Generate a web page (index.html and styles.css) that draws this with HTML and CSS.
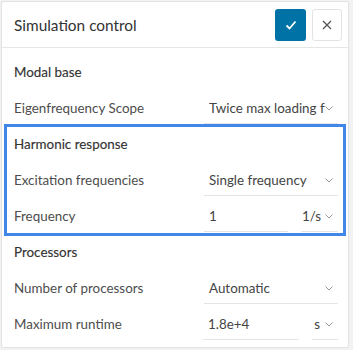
FILE: index.html
```html
<!DOCTYPE html>
<html lang="en">
<head>
  <meta charset="UTF-8">
  <meta name="viewport" content="width=device-width, initial-scale=1.0">
  <title>Simulation control</title>
  <link rel="stylesheet" href="styles.css">
</head>
<body>
  <div class="panel">
    <div class="panel-head">
      <h1 class="title">Simulation control</h1>
      <div class="actions">
        <button class="btn btn-ok">
          <svg width="14" height="14" viewBox="0 0 14 14"><polyline points="2.5,7.5 5.5,10.5 11.5,3.5" fill="none" stroke="#fff" stroke-width="1.8"/></svg>
        </button>
        <button class="btn btn-close">
          <svg width="10" height="10" viewBox="0 0 10 10"><path d="M1 1L9 9M9 1L1 9" stroke="#555" stroke-width="1.3"/></svg>
        </button>
      </div>
    </div>

    <div class="panel-body">
      <div class="row section">Modal base</div>
      <div class="row">
        <span class="label">Eigenfrequency Scope</span>
        <div class="field select">
          <span class="value clip">Twice max loading frequency</span>
          <svg class="chev" width="8" height="5" viewBox="0 0 8 5"><polyline points="0.5,0.5 4,4 7.5,0.5" fill="none" stroke="#999"/></svg>
        </div>
      </div>

      <div class="group active">
        <div class="row section">Harmonic response</div>
        <div class="row">
          <span class="label">Excitation frequencies</span>
          <div class="field select">
            <span class="value">Single frequency</span>
            <svg class="chev" width="8" height="5" viewBox="0 0 8 5"><polyline points="0.5,0.5 4,4 7.5,0.5" fill="none" stroke="#999"/></svg>
          </div>
        </div>
        <div class="row">
          <span class="label">Frequency</span>
          <div class="combo">
            <div class="field input wide"><span class="value">1</span></div>
            <div class="field select unit">
              <span class="value">1/s</span>
              <svg class="chev" width="8" height="5" viewBox="0 0 8 5"><polyline points="0.5,0.5 4,4 7.5,0.5" fill="none" stroke="#999"/></svg>
            </div>
          </div>
        </div>
      </div>

      <div class="row section">Processors</div>
      <div class="row">
        <span class="label">Number of processors</span>
        <div class="field select">
          <span class="value">Automatic</span>
          <svg class="chev" width="8" height="5" viewBox="0 0 8 5"><polyline points="0.5,0.5 4,4 7.5,0.5" fill="none" stroke="#999"/></svg>
        </div>
      </div>
      <div class="row">
        <span class="label">Maximum runtime</span>
        <div class="combo">
          <div class="field input wider"><span class="value">1.8e+4</span></div>
          <div class="field select unit-s">
            <span class="value">s</span>
            <svg class="chev" width="8" height="5" viewBox="0 0 8 5"><polyline points="0.5,0.5 4,4 7.5,0.5" fill="none" stroke="#999"/></svg>
          </div>
        </div>
      </div>
    </div>
  </div>
</body>
</html>
```

FILE: styles.css
```css
body {
  margin: 0;
  background-color: #f2f2f2;
  font-family: Lato, "Liberation Sans", sans-serif;
  color: #4d4d4d;
}

.panel {
  width: 346px;
  margin: 1px 0 0 1px;
  height: 345px;
  background-color: #fff;
  border: 1px solid #e2e2e2;
  border-radius: 2px;
}

.panel-head {
  display: flex;
  align-items: center;
  justify-content: space-between;
  height: 45px;
  padding: 0 6px 0 12px;
  border-bottom: 1px solid #e6e6e6;
}

.title {
  margin: 0;
  font-size: 15.4px;
  font-weight: 400;
  color: #333;
}

.actions {
  display: flex;
  gap: 6px;
}

.btn {
  display: flex;
  align-items: center;
  justify-content: center;
  height: 32px;
  padding: 0;
  border-radius: 3px;
  cursor: pointer;
}

.btn-ok {
  width: 31px;
  background-color: #0072a6;
  border: none;
}

.btn-close {
  width: 30px;
  background-color: #fff;
  border: 1px solid #e3e3e3;
}

.panel-body {
  padding-top: 6px;
}

.row {
  display: flex;
  align-items: center;
  justify-content: space-between;
  height: 36px;
  padding: 0 10px 0 12px;
  font-size: 13.4px;
}

.section {
  color: #333;
  -webkit-text-stroke: 0.15px #333;
}

.label {
  color: #4d4d4d;
}

.group.active {
  outline: 3px solid #4287e8;
  outline-offset: -1px;
  margin: 0 4px;
}

.group.active .row {
  padding: 0 6px 0 8px;
}

.field {
  display: flex;
  align-items: center;
  height: 31px;
  margin-top: 1px;
  border-bottom: 1px solid #e4e4e4;
  box-sizing: border-box;
  color: #444;
}

.field.select {
  width: 134px;
  padding: 0 5px 0 5px;
  justify-content: space-between;
}

.value {
  white-space: nowrap;
}

.value.clip {
  width: 116px;
  overflow: hidden;
}

.chev {
  flex: none;
}

.combo {
  display: flex;
  gap: 13px;
}

.field.input {
  padding-left: 5px;
}

.field.wide {
  width: 84px;
}

.field.wider {
  width: 96px;
}

.combo .field.unit {
  width: 37px;
  padding: 0 5px 0 0;
  justify-content: flex-end;
  gap: 4px;
}

.combo .field.unit-s {
  width: 26px;
  padding: 0 5px 0 0;
  justify-content: flex-end;
  gap: 5px;
}
```
